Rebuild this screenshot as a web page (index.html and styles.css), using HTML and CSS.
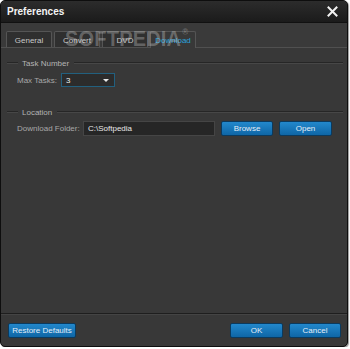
FILE: index.html
```html
<!DOCTYPE html>
<html>
<head>
<meta charset="utf-8">
<link rel="stylesheet" href="styles.css">
</head>
<body>
<div class="window">
  <div class="titlebar">
    <span class="title">Preferences</span>
    <svg class="close" width="11" height="11" viewBox="0 0 11 11"><path d="M1.5 1.5 L9.5 9.5 M9.5 1.5 L1.5 9.5" stroke="#f2f2f2" stroke-width="2" stroke-linecap="square"/></svg>
  </div>
  <div class="tabbar">
    <div class="tab">General</div>
    <div class="tab">Convert</div>
    <div class="tab">DVD</div>
    <div class="tab active">Download</div>
  </div>
  <div class="content">
    <div class="group-head"><span class="line short"></span><span class="gtitle">Task Number</span><span class="line long"></span></div>
    <div class="row first">
      <span class="label w-max">Max Tasks:</span>
      <div class="select"><span>3</span><span class="arrow"></span></div>
    </div>
    <div class="group-head loc"><span class="line short"></span><span class="gtitle">Location</span><span class="line long"></span></div>
    <div class="row second">
      <span class="label w-folder">Download Folder:</span>
      <div class="input">C:\Softpedia</div>
      <button class="btn w-browse">Browse</button>
      <button class="btn w-open">Open</button>
    </div>
  </div>
  <div class="footer">
    <button class="btn w-restore">Restore Defaults</button>
    <div class="spacer"></div>
    <button class="btn w-ok">OK</button>
    <button class="btn w-cancel">Cancel</button>
  </div>
  <div class="watermark">SOFTPEDIA<sup>®</sup></div>
</div>
</body>
</html>
```
FILE: styles.css
```css
html, body {
  margin: 0;
  padding: 0;
  background: #ffffff;
}
body {
  font-family: "Liberation Sans", Arial, sans-serif;
  font-size: 8px;
}
.window {
  position: relative;
  box-sizing: border-box;
  width: 348px;
  height: 347px;
  border: 1px solid #0e0e0e;
  border-radius: 5px;
  background: #383838;
  display: flex;
  flex-direction: column;
  overflow: hidden;
  box-shadow: 1px 1px 1px rgba(0,0,0,0.4);
}
.titlebar {
  height: 21px;
  border-bottom: 1px solid #111;
  background: linear-gradient(#2c2c2c, #1b1b1b);
  display: flex;
  align-items: center;
  justify-content: space-between;
  padding: 0 9px 0 6px;
}
.title {
  color: #f4f4f4;
  font-weight: bold;
  font-size: 10px;
}
.close {
  display: block;
}
.tabbar {
  height: 16px;
  padding: 8px 0 0 5px;
  background: #3a3a3a;
  border-bottom: 1px solid #505050;
  display: flex;
  gap: 2px;
}
.tab {
  box-sizing: border-box;
  width: 46px;
  height: 16px;
  border: 1px solid #555;
  border-bottom: none;
  border-radius: 2px 2px 0 0;
  background: #2f2f2f;
  color: #c8c8c8;
  display: flex;
  align-items: center;
  justify-content: center;
  padding-top: 1px;
}
.tab.active {
  height: 17px;
  margin-bottom: -1px;
  background: #383838;
  color: #2aa3dc;
}
.content {
  flex: 1;
  padding: 0 4px 0 6px;
}
.group-head {
  display: flex;
  align-items: center;
  height: 10px;
  margin-top: 10px;
}
.group-head.loc {
  margin-top: 20px;
}
.line {
  height: 1px;
  background: #262626;
  border-bottom: 1px solid #474747;
}
.line.short {
  width: 11px;
}
.line.long {
  flex: 1;
}
.gtitle {
  color: #b4b4b4;
  padding: 0 5px 0 4px;
}
.row {
  display: flex;
  align-items: center;
  padding-left: 10px;
}
.row.first {
  margin-top: 5px;
  height: 14px;
}
.row.second {
  margin-top: 4px;
  height: 15px;
  gap: 6px;
}
.label {
  color: #a8a8a8;
}
.w-max { width: 44px; }
.w-folder { width: 66px; margin-right: -6px; }
.select {
  box-sizing: border-box;
  width: 54px;
  height: 14px;
  border: 1px solid #22607f;
  background: #2c2c2c;
  color: #f0f0f0;
  display: flex;
  align-items: center;
  justify-content: space-between;
  padding: 0 5px 0 4px;
}
.arrow {
  width: 0;
  height: 0;
  border-left: 3px solid transparent;
  border-right: 3px solid transparent;
  border-top: 3px solid #e8e8e8;
}
.input {
  box-sizing: border-box;
  width: 132px;
  height: 15px;
  border: 1px solid #454545;
  background: #262626;
  color: #e6e6e6;
  display: flex;
  align-items: center;
  padding-left: 4px;
}
.btn {
  box-sizing: border-box;
  height: 15px;
  margin: 0;
  padding: 0;
  border: 1px solid #0b3a5e;
  border-radius: 2px;
  background: linear-gradient(#2288cc, #0f66a6);
  color: #e4eef8;
  font-family: "Liberation Sans", Arial, sans-serif;
  font-size: 8px;
  display: flex;
  align-items: center;
  justify-content: center;
}
.w-browse { width: 52px; }
.w-open { width: 53px; }
.footer {
  height: 33px;
  box-sizing: border-box;
  border-top: 1px solid #1e1e1e;
  box-shadow: inset 0 1px 0 #444;
  padding: 9px 6px 0 7px;
  display: flex;
  gap: 6px;
  align-items: flex-start;
}
.spacer { flex: 1; }
.w-restore { width: 68px; }
.w-ok { width: 53px; }
.w-cancel { width: 52px; }
.watermark {
  position: absolute;
  left: 64px;
  top: 25px;
  font-weight: bold;
  font-size: 20px;
  letter-spacing: 0.2px;
  color: rgba(215,215,215,0.33);
  transform: scaleY(1.12);
  transform-origin: left top;
  pointer-events: none;
}
.watermark sup {
  font-size: 8px;
  vertical-align: 10px;
  margin-left: 1px;
}
```
